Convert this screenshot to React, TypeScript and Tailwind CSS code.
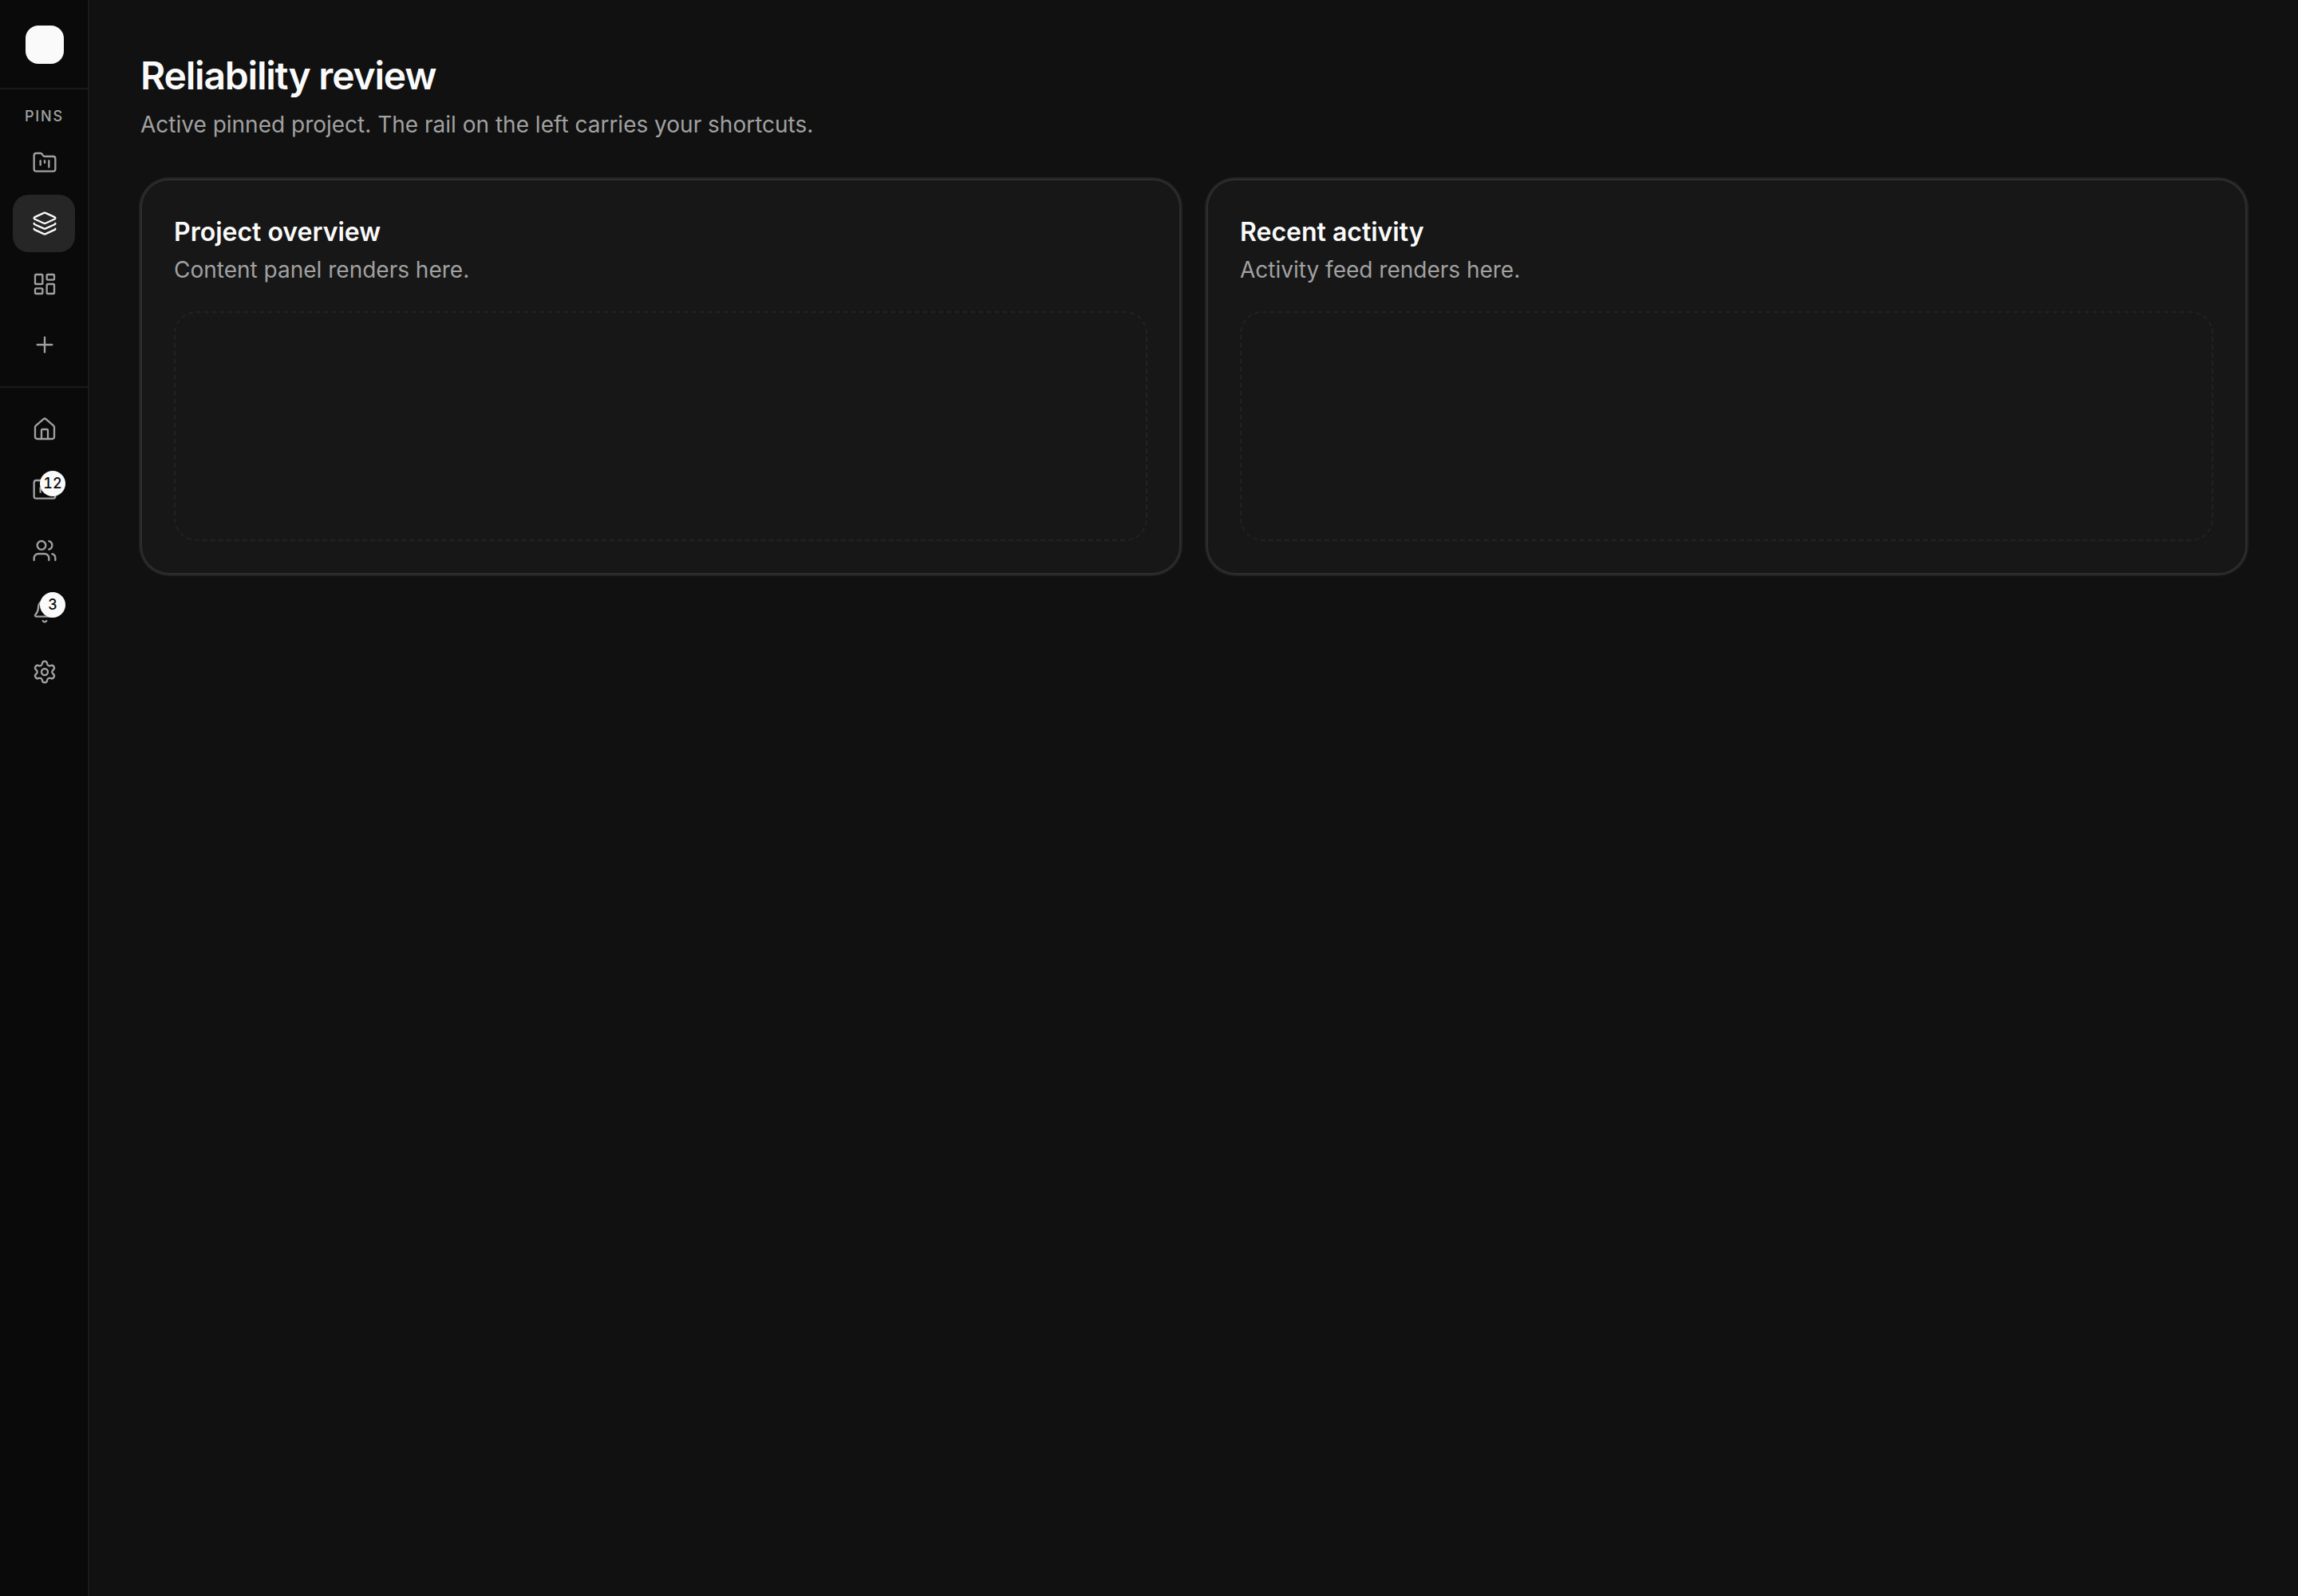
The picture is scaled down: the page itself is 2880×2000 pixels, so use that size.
import React from 'react';
import { Bell, FolderKanban, House, Layers, LayoutDashboard, Plus, Settings, Users, type LucideIcon } from 'lucide-react';

interface RailItem {
    label: string;
    icon: LucideIcon;
    active?: boolean;
    badge?: number;
}

const pins: RailItem[] = [
    { label: 'Projects', icon: FolderKanban },
    { label: 'Reliability review', icon: Layers, active: true },
    { label: 'Dashboards', icon: LayoutDashboard },
    { label: 'Add pin', icon: Plus },
];

const links: RailItem[] = [
    { label: 'Home', icon: House },
    { label: 'All projects', icon: FolderKanban, badge: 12 },
    { label: 'People', icon: Users },
    { label: 'Notifications', icon: Bell, badge: 3 },
    { label: 'Settings', icon: Settings },
];

const RailButton: React.FC<{ item: RailItem }> = ({ item }) => {
    const Icon = item.icon;

    return (
        <button
            aria-label={item.label}
            className={`relative flex h-[72px] w-full items-center rounded-[20px] px-6 ${
                item.active ? 'bg-[#262626] text-[#fafafa]' : 'text-[#a1a1a1]'
            }`}
        >
            <Icon size={32} strokeWidth={1.75} className="shrink-0" />
            {item.badge && (
                <span className="absolute top-3 left-[34px] flex size-8 items-center justify-center rounded-full bg-[#fafafa] text-[18px] leading-none font-medium text-[#0a0a0a] tabular-nums">
                    {item.badge}
                </span>
            )}
        </button>
    );
};

const Panel: React.FC<{ title: string; description: string }> = ({ title, description }) => (
    <section className="rounded-[36px] border-2 border-[#2e2e2e] bg-[#171717] p-10 shadow-[0_0_0_2px_#222222]">
        <h2 className="text-[32px] leading-[50px] font-semibold text-[#fafafa]">{title}</h2>
        <p className="mt-0.5 text-[28px] leading-10 text-[#a1a1a1]">{description}</p>
        <div className="mt-8 h-72 rounded-[28px] border-2 border-dashed border-[#222222]" />
    </section>
);

const App: React.FC = () => {
    return (
        <div className="flex h-[2000px] w-full bg-[#111111] font-['Inter',sans-serif]">
            {/* Icon rail */}
            <aside className="flex w-28 shrink-0 flex-col border-r-2 border-[#1a1a1a] bg-[#0a0a0a]">
                <div className="h-28 border-b-2 border-[#1a1a1a] pt-8 pl-8">
                    <div className="size-12 rounded-2xl bg-[#fafafa]" />
                </div>

                <div className="border-b-2 border-[#1a1a1a] px-4 pb-4">
                    <div className="flex h-14 items-center pt-3 pl-[15px] text-[18px] leading-none font-medium tracking-[0.1em] text-[#a1a1a1]">
                        PINS
                    </div>
                    <nav className="flex flex-col gap-1">
                        {pins.map((item) => (
                            <RailButton key={item.label} item={item} />
                        ))}
                    </nav>
                </div>

                <nav className="flex flex-col gap-1 px-4 pt-4">
                    {links.map((item) => (
                        <RailButton key={item.label} item={item} />
                    ))}
                </nav>
            </aside>

            <main className="flex-1 p-16">
                <h1 className="text-[48px] leading-[62px] font-semibold tracking-[-0.025em] text-[#fafafa]">Reliability review</h1>
                <p className="mt-2.5 text-[28px] leading-10 text-[#a1a1a1]">
                    Active pinned project. The rail on the left carries your shortcuts.
                </p>

                <div className="mt-12 grid grid-cols-2 gap-8">
                    <Panel title="Project overview" description="Content panel renders here." />
                    <Panel title="Recent activity" description="Activity feed renders here." />
                </div>
            </main>
        </div>
    );
};

export default App;
